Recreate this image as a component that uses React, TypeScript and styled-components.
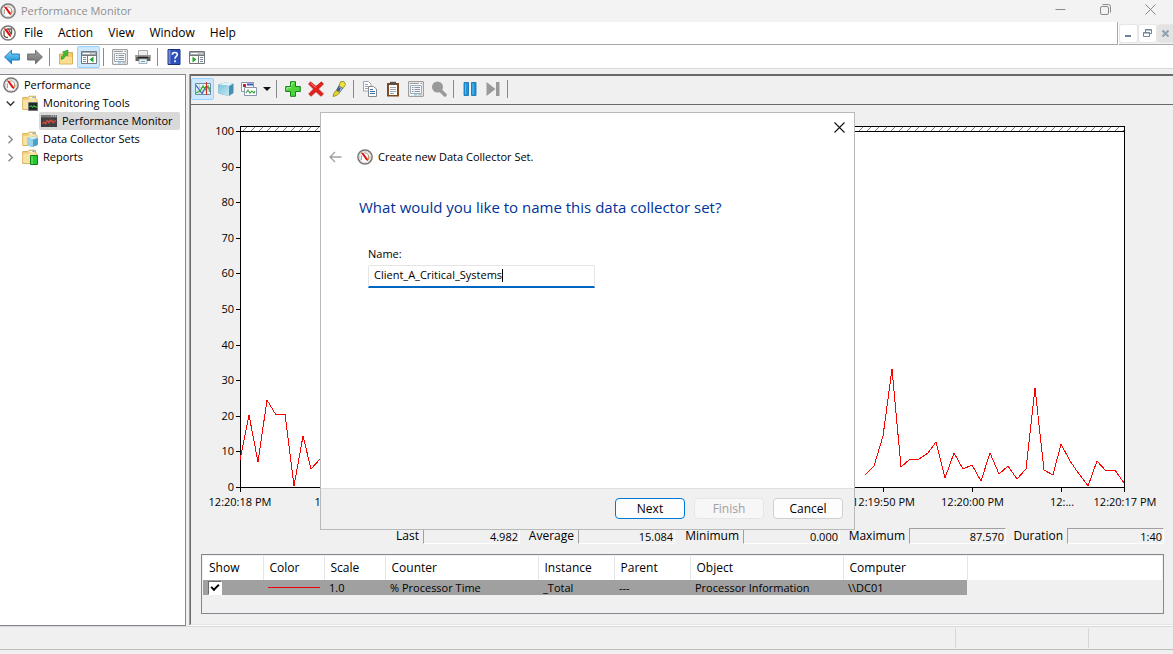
import React from "react";
import styled, { createGlobalStyle, css } from "styled-components";

const GlobalStyle = createGlobalStyle`
  *, *::before, *::after { box-sizing: border-box; }
  body {
    margin: 0;
    background: #f0f0f0;
    color: #000;
    font-family: "Open Sans", "Noto Sans", sans-serif;
    font-size: 12px;
    line-height: 16px;
  }
  button, input { font: inherit; color: inherit; }
`;

const Window = styled.div`
  position: relative;
  min-height: 100vh;
  display: flex;
  flex-direction: column;
  overflow: hidden;
`;

const TitleBar = styled.header`
  display: flex;
  align-items: center;
  height: 22px;
  background: #f3f3f3;
  color: #8f8f8f;
`;

const Title = styled.h1`
  flex: 1;
  margin: 0 0 0 5px;
  font-size: 11px;
  font-weight: 400;
`;

const CaptionButton = styled.button`
  width: 45px;
  height: 22px;
  padding: 0 0 3px;
  border: 0;
  background: none;
  display: grid;
  place-items: center;
`;

const MenuRow = styled.div`
  display: flex;
  height: 23px;
  background: #fff;
`;

const MenuBar = styled.nav`
  flex: 1;
  display: flex;
  align-items: center;
  gap: 15px;
  border-right: 1px solid #a8a8a8;
  border-bottom: 1px solid #a8a8a8;
`;

const MenuItem = styled.button<{ $first?: boolean }>`
  padding: 0;
  border: 0;
  background: none;
  margin-left: ${(p) => (p.$first ? "-7px" : "0")};
`;

const MdiControls = styled.div`
  display: flex;
  align-items: center;
  gap: 2px;
  padding-left: 1px;
  margin-left: 1px;
  background: #f3f3f3;
  border-bottom: 1px solid #a8a8a8;
`;

const MdiButton = styled.button<{ $muted?: boolean }>`
  width: ${(p) => (p.$muted ? "15px" : "17px")};
  height: 17px;
  padding: 0;
  border: 0;
  border-radius: 2px;
  background: ${(p) => (p.$muted ? "#e3e3e3" : "#fff")};
  box-shadow: 0 0 0 1px #e6e6e6;
  display: grid;
  place-items: center;
`;

const ToolBar = styled.div<{ $tone: "white" | "gray" }>`
  display: flex;
  align-items: center;
  ${(p) =>
    p.$tone === "white"
      ? css`
          height: 24px;
          padding-top: 1px;
          background: #fff;
          border-bottom: 1px solid #d9d9d9;
        `
      : css`
          height: 29px;
          padding: 0 0 2px;
          border-bottom: 1px solid #696969;
        `}
`;

const ToolButton = styled.button<{ $active?: boolean; $narrow?: boolean }>`
  flex: none;
  width: ${(p) => (p.$narrow ? "13px" : "23px")};
  height: 22px;
  padding: 0;
  border: 1px solid ${(p) => (p.$active ? "#99d1ff" : "transparent")};
  border-radius: 2px;
  background: ${(p) => (p.$active ? "#cce8ff" : "none")};
  display: grid;
  place-items: center;
`;

const Separator = styled.span`
  flex: none;
  width: 8px;
  height: 18px;
  background: linear-gradient(#8a8a8a, #8a8a8a) 3px 0 / 1px 100% no-repeat;
`;

const Workspace = styled.div`
  flex: 1;
  display: flex;
  gap: 4px;
  padding-top: 5px;
`;

const TreePane = styled.aside`
  width: 186px;
  padding-top: 1px;
  background: #fff;
  border: 1px solid #828790;
  border-left: 0;
  font-size: 11px;
`;

const TreeList = styled.ul`
  list-style: none;
  margin: 0;
  padding: 0;
`;

const TreeRow = styled.li<{ $level: number }>`
  display: flex;
  align-items: center;
  height: 18px;
  padding-left: ${(p) => [3, 3, 39][p.$level]}px;
`;

const TreeToggle = styled.button`
  width: 19px;
  height: 16px;
  padding: 0 4px 0 0;
  border: 0;
  background: none;
  display: grid;
  place-items: center;
`;

const TreeLabel = styled.span<{ $selected?: boolean }>`
  display: flex;
  align-items: center;
  gap: 5px;
  height: 18px;
  padding: ${(p) => (p.$selected ? "0 7px 0 2px" : "0")};
  border-radius: 2px;
  background: ${(p) => (p.$selected ? "#d9d9d9" : "none")};
  white-space: nowrap;
`;

const Content = styled.main`
  flex: 1;
  min-width: 0;
  display: flex;
  flex-direction: column;
  margin-bottom: 1px;
  border-left: 1px solid #696969;
  border-top: 2px solid #696969;
  border-bottom: 1px solid #e3e3e3;
  box-shadow: -1px 0 0 #a0a0a0, 0 1px 0 #fff;
`;

const Chart = styled.section`
  display: grid;
  grid-template-columns: 45px minmax(0, 1fr);
  padding: 17px 48px 0 0;
  font-size: 11px;
`;

const ScaleLabels = styled.ol`
  list-style: none;
  margin: 0;
  padding: 0 2px 0 0;
  height: 374px;
  display: flex;
  flex-direction: column;
  justify-content: space-between;
  text-align: right;
  line-height: 18px;
`;

const Plot = styled.svg`
  display: block;
  width: 100%;
  height: 366px;
  margin-top: 4px;
`;

const TimeLabels = styled.ol`
  list-style: none;
  margin: -2px 0 0;
  padding: 0 16px 0 17px;
  display: grid;
  grid-template-columns: 64fr 30fr 88fr 93fr repeat(6, 89fr) 14fr 62fr 64fr;
  justify-items: center;
  font-size: 11px;
  white-space: nowrap;
`;

const TimeLabel = styled.li<{ $column: number }>`
  grid-column: ${(p) => p.$column};
  display: flex;
  justify-content: center;
  width: 0;
`;

const Stats = styled.dl`
  display: flex;
  justify-content: flex-end;
  margin: 18px 9px 0 0;
  line-height: 16px;
`;

const StatName = styled.dt<{ $width: number }>`
  width: ${(p) => p.$width}px;
  padding-right: 4px;
  display: flex;
  justify-content: flex-end;
`;

const StatValue = styled.dd`
  width: 97px;
  height: 16px;
  margin: 0;
  padding-right: 1px;
  text-align: right;
  border: 1px solid;
  border-color: #a0a0a0 #fff #fff #a0a0a0;
  font-size: 11px;
  line-height: 15px;
`;

const CounterPane = styled.section`
  height: 60px;
  margin: 10px 9px 10px 10px;
  padding: 1px;
  border: 1px solid #828790;
  background: linear-gradient(#fff, #fff) 1px 1px / calc(100% - 2px) 24px no-repeat;
`;

const CounterTable = styled.table`
  width: 764px;
  table-layout: fixed;
  border-collapse: collapse;
`;

const HeadCell = styled.th<{ $width: number }>`
  width: ${(p) => p.$width}px;
  height: 24px;
  padding: 0 0 0 6px;
  text-align: left;
  font-weight: 400;
  border-right: 1px solid #e5e5e5;
`;

const Cell = styled.td`
  height: 15px;
  padding: 0 0 0 5px;
  font-size: 11px;
  line-height: 15px;
  background: #a0a0a0;
  white-space: nowrap;
`;

const ShowBox = styled.input`
  appearance: none;
  width: 14px;
  height: 14px;
  margin: 0;
  border: 1px solid;
  border-color: #696969 #fff #fff #696969;
  background: #fff;
  display: grid;
  place-items: center;
  &:checked::before {
    content: "";
    width: 8px;
    height: 5px;
    margin-bottom: 3px;
    border: solid #000;
    border-width: 0 0 2px 2px;
    transform: rotate(-45deg);
  }
`;

const LineSwatch = styled.span`
  display: block;
  height: 1px;
  margin-right: 4px;
  background: #f00000;
`;

const StatusBar = styled.footer`
  display: grid;
  grid-template-columns: 1fr 133px 84px;
  height: 24px;
  padding: 1px 0;
  background: #f0f0f0;
  border-top: 1px solid #d7d7d7;
  border-bottom: 1px solid #bdbdbd;
`;

const StatusCell = styled.span`
  border-right: 1px solid #d7d7d7;
  &:last-child { border-right: 0; }
`;

const BottomEdge = styled.div`
  height: 4px;
`;

const Dialog = styled.section`
  position: absolute;
  left: 320px;
  top: 112px;
  width: 535px;
  height: 418px;
  display: flex;
  flex-direction: column;
  background: #fff;
  border: 1px solid #b9b9b9;
`;

const DialogTop = styled.div`
  display: flex;
  justify-content: flex-end;
  padding: 4px 5px 0 0;
`;

const PlainButton = styled.button`
  width: 20px;
  height: 20px;
  padding: 0;
  border: 0;
  background: none;
  display: grid;
  place-items: center;
`;

const DialogHeading = styled.div`
  display: flex;
  align-items: center;
  height: 20px;
  margin-top: 10px;
  padding-left: 4px;
`;

const HeadingIcon = styled.span`
  display: flex;
  margin: 0 5px 0 12px;
`;

const DialogTitle = styled.h2`
  margin: 0;
  font-size: 11px;
  font-weight: 400;
`;

const DialogBody = styled.div`
  flex: 1;
  padding: 29px 38px 0;
`;

const Question = styled.h3`
  margin: 0 0 28px;
  font-size: 15px;
  line-height: 22px;
  font-weight: 400;
  color: #003399;
`;

const Field = styled.div`
  margin-left: 9px;
  width: 227px;
`;

const FieldLabel = styled.label`
  display: block;
  font-size: 11px;
  margin-bottom: 3px;
`;

const InputFrame = styled.div`
  display: flex;
  align-items: center;
  height: 23px;
  padding: 0 5px 2px;
  border: 1px solid #e5e5e5;
  border-bottom: 2px solid #0067c0;
  border-radius: 2px 2px 0 0;
`;

const TextInput = styled.input`
  field-sizing: content;
  max-width: 100%;
  padding: 0;
  border: 0;
  outline: 0;
  background: none;
  font-size: 11px;
  line-height: 16px;
  caret-color: transparent;
`;

const Caret = styled.span`
  width: 1px;
  height: 13px;
  background: #000;
`;

const DialogFooter = styled.div`
  display: flex;
  justify-content: flex-end;
  gap: 9px;
  height: 41px;
  padding: 9px 11px 0 0;
  background: #f0f0f0;
  border-top: 1px solid #dfdfdf;
`;

const DialogButton = styled.button<{ $primary?: boolean }>`
  width: 70px;
  height: 21px;
  padding: 0;
  border: 1px solid ${(p) => (p.$primary ? "#0078d4" : "#d0d0d0")};
  border-radius: 4px;
  background: #fdfdfd;
  line-height: 18px;
  &:disabled {
    color: #a0a0a0;
    border-color: #e6e6e6;
    background: #f7f7f7;
  }
`;

type IconProps = { children: React.ReactNode; size?: number };
const Icon = ({ children, size = 16 }: IconProps) => (
  <svg width={size} height={size} viewBox="0 0 16 16" fill="none" aria-hidden="true">
    {children}
  </svg>
);

const GaugeIcon = () => (
  <Icon>
    <circle cx="8" cy="8" r="7.1" fill="#fff" stroke="#757575" strokeWidth="1.5" />
    <circle cx="8" cy="8" r="5.7" stroke="#d8d4d0" />
    <path d="M4.3 11V6.3M6.5 4.2c3-1 5.200.8 5.200 3.800 0 1.500-.4 2.500-1 3.300" stroke="#9c8f80" />
    <path d="M12 7.500c.2 1.500-.2 2.800-1 3.700" stroke="#d98b3d" />
    <path d="M3.800 3.600l2.600.5 4.300 5.600.3 2.300-2-.9z" fill="#e01010" />
  </Icon>
);

const DocGaugeIcon = () => (
  <Icon>
    <circle cx="8" cy="8" r="7.1" fill="#fff" stroke="#757575" strokeWidth="1.500" />
    <path d="M4 5.500v4c0 2 2 3 4 3M7 4h4.500v5" stroke="#6e5a48" strokeWidth="1.400" />
    <path d="M3.500 3.300l3 .5 4.300 6 .2 2.200-2-.9z" fill="#e01010" />
    <path d="M8.500 4.500l3 5" stroke="#333" />
  </Icon>
);

const ArrowIcon = ({ back }: { back?: boolean }) => (
  <Icon>
    <defs>
      <linearGradient id={back ? "arrowBlue" : "arrowGray"} x1="0" y1="0" x2="0" y2="1">
        <stop offset="0" stopColor={back ? "#8ad8fa" : "#a4a4a4"} />
        <stop offset="1" stopColor={back ? "#0a86d0" : "#6e6e6e"} />
      </linearGradient>
    </defs>
    <path
      d={back ? "M.6 8L7.500 1.200v3.800h7.900v6H7.500v3.800z" : "M15.400 8L8.500 1.200v3.800H.6v6h7.900v3.800z"}
      fill={back ? "url(#arrowBlue)" : "url(#arrowGray)"}
      stroke={back ? "#1673b5" : "#666"}
      strokeWidth=".9"
    />
  </Icon>
);

const folderBody = (
  <>
    <path d="M.7 2.500h5l1.300-1.300h6.500v3H15v10.300H.7z" fill="#f0cf78" stroke="#d0a848" strokeWidth=".8" />
    <path d="M7.500 2h5v1.500h-5z" fill="#fff" />
    <path d="M10.500 1.800h2v1.200h-2z" fill="#65a6dc" />
    <path d="M1.200 5h4.500L7 4h7.500v10H1.200z" fill="#f9e3a2" />
  </>
);

const UpFolderIcon = () => (
  <Icon>
    <path d="M1.500 5h6l1-1.500h6v11.500h-13z" fill="#efcb70" stroke="#cda046" strokeWidth=".8" />
    <path d="M2 8h12v6.500H2z" fill="#f9de92" />
    <path d="M3.500 10.500c2-.5 3.500-2 4.200-4.700l1.800 1.200.5-6-5.500 2 1.500 1.200c-.5 2-1.500 3-3 3.800z" fill="#45bd35" stroke="#23872a" strokeWidth=".6" />
  </Icon>
);

const PaneIcon = ({ right }: { right?: boolean }) => (
  <Icon>
    <path d="M.5 2.500h15v12H.5z" fill="#fff" stroke="#777" />
    <path d="M1 3h14v3H1z" fill="#a1a9b2" />
    <path d="M2 4.500h7M10.500 4.500h1M12.500 4.500h1" stroke="#fff" />
    <path d="M1 6.500h14" stroke="#777" />
    <path d={right ? "M9.500 6v8" : "M6.500 6v8"} stroke="#777" />
    <path d={right ? "M11 8.500h3M11 10.500h3M11 12.500h3" : "M2 8.500h3M2 10.500h3M2 12.500h3"} stroke="#7d8fa3" />
    <path d={right ? "M3.500 7.500v6l4-3z" : "M12.500 7.500v6l-4-3z"} fill="#22a52a" />
  </Icon>
);

const PropertiesIcon = () => (
  <Icon>
    <path d="M.7.7h14.600v14.600H.7z" fill="#fff" stroke="#8b8b8b" />
    <path d="M2 2.500h9M12.500 2.500h1.500" stroke="#9a9a9a" />
    <path d="M2.500 4.500h11v8h-11z" fill="#f3f5f7" stroke="#a5adb5" />
    <path d="M4 6.500h1.500M6.500 6.500H12M4 8.500h1.500M6.500 8.500H12M4 10.500h1.500M6.500 10.500H12" stroke="#8997a5" />
    <path d="M6 13.800h3" stroke="#63b8e8" />
    <path d="M10 13.800h4" stroke="#aaa" />
  </Icon>
);

const PrinterIcon = () => (
  <Icon>
    <path d="M3.500 1.500h9v5h-9z" fill="#eee" stroke="#aaa" />
    <path d="M.5 6h15v6H.5z" fill="#606060" />
    <path d="M.5 6h15v2H.5z" fill="#989898" />
    <path d="M3 8.500h10" stroke="#222" strokeWidth="1.500" />
    <path d="M4 10h8v4.500H4z" fill="#edf8fc" stroke="#888" strokeWidth=".7" />
    <path d="M6 12.500h4" stroke="#4aa9cb" />
  </Icon>
);

const HelpIcon = () => (
  <Icon>
    <path d="M2 .5h12v15H2z" fill="#2d50bd" stroke="#1c3280" />
    <path d="M2.500 1h2v14h-2z" fill="#7188cf" />
    <path d="M6.300 5.700c0-3 5-2.900 5-.2 0 2-2.300 1.900-2.300 4.200M9 11.300v2" stroke="#fff" strokeWidth="1.600" />
  </Icon>
);

const ToolsFolderIcon = () => (
  <Icon>
    {folderBody}
    <path d="M6.500 7.500h9v8h-9z" fill="#1f2924" stroke="#777" />
    <path d="M7.500 12l1.500-1.500 1.500 2 1.500-2 1 1.500h2" stroke="#4cda55" />
  </Icon>
);

const CollectorFolderIcon = () => (
  <Icon>
    {folderBody}
    <path d="M5 7L11.500 5.500 16 7v6.500L11 16l-6-1.500z" fill="#4aa3ca" />
    <path d="M5 7L11.500 5.500 16 7l-5 1.500z" fill="#cceef8" />
    <path d="M5 7l6 1.500V16l-6-1.500z" fill="#9ad3e9" />
  </Icon>
);

const ReportFolderIcon = () => (
  <Icon>
    {folderBody}
    <path d="M8.500 6.500h7v9h-7z" fill="#26c52c" stroke="#0d7d17" />
    <path d="M10 7v8" stroke="#7bf07c" />
  </Icon>
);

const MonitorIcon = () => (
  <Icon>
    <path d="M0 2h16v12H0z" fill="#3d3d3d" />
    <path d="M0 2h16v2.500H0z" fill="#777" />
    <path d="M10 3h1M12 3h1M14 3h1" stroke="#ddd" />
    <path d="M1 7.500h14M1 10.500h14M4.500 5v9M8.500 5v9M12.500 5v9" stroke="#5d4a4a" strokeWidth=".6" />
    <path d="M1 10.500l2-1 1.500 1 2-3 1.500 2 2-2.500 2 2.500L15 7.500" stroke="#e04840" strokeWidth="1.300" />
  </Icon>
);

const GraphIcon = () => (
  <Icon>
    <path d="M.5 2.500h15v11H.5z" fill="#e7f4f5" stroke="#6f8ba3" />
    <path d="M1 6.500h14M1 10h14M4.500 3v10M8 3v10" stroke="#b4ccd3" strokeWidth=".7" />
    <path d="M1 4l4 6 2 2.500 4-7 4 2" stroke="#3868b4" strokeWidth="1.200" />
    <path d="M1 12l4-2 3-5 3 4 2-4 2 6" stroke="#3caa3c" strokeWidth="1.200" />
    <path d="M11.500 1v13" stroke="#cd2c23" />
  </Icon>
);

const CubeIcon = () => (
  <Icon>
    <defs>
      <linearGradient id="cubeFront" x1="0" y1="0" x2="1" y2="1">
        <stop offset="0" stopColor="#7cc3dd" />
        <stop offset="1" stopColor="#c4e8f2" />
      </linearGradient>
    </defs>
    <path d="M.5 3.500L7 1.500l8.500 1v9.500L11 15 .5 12.500z" fill="#4590b4" />
    <path d="M.5 3.500L7 1.500l8.500 1L11 5z" fill="#dff4fa" />
    <path d="M.5 3.500L11 5v10L.5 12.500z" fill="url(#cubeFront)" />
  </Icon>
);

const GraphTypeIcon = () => (
  <Icon>
    <path d="M.5 1.500h12v9H.5z" fill="#fff" stroke="#8d95ad" />
    <path d="M2 3h3v3H2z" fill="#c4203a" />
    <path d="M6 3.500h6" stroke="#3c57b5" strokeWidth="2" />
    <path d="M3.500 6.500h12v8h-12z" fill="#fff" stroke="#8d95ad" />
    <path d="M5 12l2-3 2 3 2-2 2 2 1-2" stroke="#42a348" strokeWidth="1.200" />
  </Icon>
);

const PlusIcon = () => (
  <Icon>
    <path d="M5.500.700h5v4.800h4.800v5h-4.800v4.800h-5v-4.800H.7v-5h4.800z" fill="#4fd43a" stroke="#16801a" />
    <path d="M6.700 5V2h2.500M2 9V6.700h4" stroke="#aaf29b" />
  </Icon>
);

const DeleteIcon = () => (
  <Icon>
    <path d="M2.500.8L8 5.300 13.500.8l2 2.200-5 5 5 5-2.500 2.300L8 10.700 3 15.300.7 13l4.800-5-5-5z" fill="#e3201c" stroke="#b3120f" strokeWidth=".6" />
    <path d="M2.500 2L8 6.700" stroke="#f78783" />
  </Icon>
);

const HighlightIcon = () => (
  <Icon>
    <path d="M9.500.7l3.500-.2 1.500 3-2.500 4-4.200-2z" fill="#efe23a" stroke="#8c8420" strokeWidth=".8" />
    <path d="M7.800 4.500l4.200 2.700-3 4.300-4.200-2z" fill="#3f5f8b" />
    <path d="M8.500 6.500l2 1-2 3" stroke="#c5d5e5" />
    <path d="M5 9.500l4 2-3.500 3L2 15.500 3 12z" fill="#e5d62c" stroke="#8c8420" strokeWidth=".8" />
  </Icon>
);

const CopyIcon = () => (
  <Icon>
    <path d="M1.500.5h5l2.500 2.500v7H1.500z" fill="#fff" stroke="#a4a4a4" />
    <path d="M3 3.500h3M3 5.500h4M3 7.500h4" stroke="#8ba6c6" />
    <path d="M6.500 5.500h5L14.500 8v7.500h-8z" fill="#fff" stroke="#888" />
    <path d="M8 8.500h3M8 10.500h5M8 12.500h5" stroke="#3474b5" />
  </Icon>
);

const PasteIcon = () => (
  <Icon>
    <path d="M2 2h12v13.500H2z" fill="#7b4a20" />
    <path d="M4 4h8v10H4z" fill="#fff" />
    <path d="M5 .8h6v3H5z" fill="#55514c" />
    <path d="M5 6.500h6M5 8.500h6M5 10.500h6M5 12.500h4" stroke="#9ba7b5" />
  </Icon>
);

const SearchIcon = () => (
  <Icon>
    <circle cx="6.500" cy="6" r="5.500" fill="#999" />
    <path d="M9 9l5 5" stroke="#999" strokeWidth="3.500" strokeLinecap="round" />
  </Icon>
);

const PauseIcon = () => (
  <Icon>
    <path d="M2 1.500h4.500v13H2zM9.500 1.500H14v13H9.500z" fill="#1e94dd" stroke="#116cad" strokeWidth=".8" />
    <path d="M3.500 2.500v11M11 2.500v11" stroke="#58bff2" />
  </Icon>
);

const StepIcon = () => (
  <Icon>
    <path d="M1.500 1l9 7-9 7zM11 1h3.500v14H11z" fill="#999" />
  </Icon>
);

const timeTicks: [number, string][] = [
  [1, "12:20:18 PM"],
  [3, "12:18:50 PM"],
  [9, "12:19:50 PM"],
  [10, "12:20:00 PM"],
  [12, "12:..."],
  [13, "12:20:17 PM"],
];

const tickPositions = [4, 113, 202, 291, 380, 469, 558, 647, 736, 825, 888];

const earlier =
  "4,334 13,289 22,336 31,274 40,289 49,288 58,360 67,310 75,343 84,333";
const later =
  "629,349 638,340 647,310 656,243 665,341 674,333 683,333 692,327 700,316 709,352 718,327 727,343 736,339 745,355 754,327 763,348 772,340 781,353 790,343 799,262 808,344 817,349 825,318 834,335 843,348 852,360 861,335 870,345 879,344 888,357";

const stats: [string, string, number][] = [
  ["Last", "4.982", 40],
  ["Average", "15.084", 58],
  ["Minimum", "0.000", 68],
  ["Maximum", "87.570", 69],
  ["Duration", "1:40", 61],
];

const columns: [string, number][] = [
  ["Show", 60],
  ["Color", 61],
  ["Scale", 61],
  ["Counter", 153],
  ["Instance", 76],
  ["Parent", 76],
  ["Object", 153],
  ["Computer", 124],
];

const PerformancePlot = () => (
  <Plot viewBox="0 0 889 366" preserveAspectRatio="none" role="img" aria-label="Processor time history">
    <defs>
      <pattern id="hatch" width="8" height="5" x="5" y="1" patternUnits="userSpaceOnUse">
        <path d="M1 5L6 0" stroke="#555" strokeWidth=".8" />
      </pattern>
    </defs>
    <rect x="4" y="0" width="885" height="362" fill="#fff" />
    <rect x="5" y="1" width="883" height="4" fill="url(#hatch)" />
    <g shapeRendering="crispEdges">
      <path d="M4.500 366V.5h884V366M4 5.500h885M0 361.500h888" fill="none" stroke="#000" />
      {Array.from({ length: 10 }, (_, i) => (
        <rect key={i} x="0" y={5 + Math.round(i * 35.6)} width="4" height="1" fill="#000" />
      ))}
      {tickPositions.map((x) => (
        <rect key={x} x={x} y="362" width="1" height="4" fill="#000" />
      ))}
      {[earlier, later].map((points) => (
        <polyline key={points} points={points} fill="none" stroke="#f00" strokeWidth="1" vectorEffect="non-scaling-stroke" />
      ))}
    </g>
  </Plot>
);

const CreateSetDialog = () => (
  <Dialog role="dialog" aria-labelledby="dialog-title">
    <DialogTop>
      <PlainButton aria-label="Close">
        <svg width="11" height="11" viewBox="0 0 11 11">
          <path d="M.5.5l10 10M10.500.5l-10 10" stroke="#111" strokeWidth="1.100" />
        </svg>
      </PlainButton>
    </DialogTop>
    <DialogHeading>
      <PlainButton aria-label="Back">
        <svg width="13" height="12" viewBox="0 0 13 12" fill="none">
          <path d="M12.500 6H1M6 1L1 6l5 5" stroke="#a0a0a0" strokeWidth="1.300" />
        </svg>
      </PlainButton>
      <HeadingIcon><GaugeIcon /></HeadingIcon>
      <DialogTitle id="dialog-title">Create new Data Collector Set.</DialogTitle>
    </DialogHeading>
    <DialogBody>
      <Question>What would you like to name this data collector set?</Question>
      <Field>
        <FieldLabel htmlFor="set-name">Name:</FieldLabel>
        <InputFrame>
          <TextInput id="set-name" type="text" defaultValue="Client_A_Critical_Systems" />
          <Caret />
        </InputFrame>
      </Field>
    </DialogBody>
    <DialogFooter>
      <DialogButton $primary>Next</DialogButton>
      <DialogButton disabled>Finish</DialogButton>
      <DialogButton>Cancel</DialogButton>
    </DialogFooter>
  </Dialog>
);

const Chevron = ({ open }: { open?: boolean }) => (
  <svg width="9" height="9" viewBox="0 0 9 9" fill="none">
    <path
      d={open ? "M.7 2.500l3.800 3.800 3.800-3.800" : "M2.500.7l3.800 3.800-3.800 3.800"}
      stroke={open ? "#333" : "#8b8b8b"}
      strokeWidth="1.400"
    />
  </svg>
);

export default function App() {
  return (
    <>
      <GlobalStyle />
      <Window>
        <TitleBar>
          <GaugeIcon />
          <Title>Performance Monitor</Title>
          <CaptionButton aria-label="Minimize">
            <svg width="11" height="11" viewBox="0 0 11 11"><path d="M.5 5.500h10" stroke="#8a8a8a" /></svg>
          </CaptionButton>
          <CaptionButton aria-label="Restore">
            <svg width="11" height="11" viewBox="0 0 11 11" fill="none" stroke="#8a8a8a">
              <rect x=".5" y="2.500" width="8" height="8" rx="1.500" />
              <path d="M2.500.5h6a2 2 0 012 2v6" />
            </svg>
          </CaptionButton>
          <CaptionButton aria-label="Close">
            <svg width="11" height="11" viewBox="0 0 11 11"><path d="M.5.5l10 10M10.500.5l-10 10" stroke="#8a8a8a" /></svg>
          </CaptionButton>
        </TitleBar>

        <MenuRow>
          <MenuBar>
            <DocGaugeIcon />
            <MenuItem $first>File</MenuItem>
            <MenuItem>Action</MenuItem>
            <MenuItem>View</MenuItem>
            <MenuItem>Window</MenuItem>
            <MenuItem>Help</MenuItem>
          </MenuBar>
          <MdiControls>
            <MdiButton aria-label="Minimize view">
              <svg width="9" height="9" viewBox="0 0 9 9"><path d="M1 7h6" stroke="#6f849b" strokeWidth="2" /></svg>
            </MdiButton>
            <MdiButton aria-label="Restore view">
              <svg width="9" height="9" viewBox="0 0 9 9" fill="none" stroke="#6f849b">
                <path d="M2.500 3V.5h6v4H7M2 1h7M.5 3.500h6v4h-6zM0 4h7" />
              </svg>
            </MdiButton>
            <MdiButton $muted aria-label="Close view">
              <svg width="9" height="9" viewBox="0 0 9 9"><path d="M1.500 1.500l6 6M7.500 1.500l-6 6" stroke="#8fa0b0" strokeWidth="2" /></svg>
            </MdiButton>
          </MdiControls>
        </MenuRow>

        <ToolBar $tone="white">
          <ToolButton aria-label="Back"><ArrowIcon back /></ToolButton>
          <ToolButton aria-label="Forward"><ArrowIcon /></ToolButton>
          <Separator />
          <ToolButton aria-label="Up one level"><UpFolderIcon /></ToolButton>
          <ToolButton $active aria-label="Show console tree"><PaneIcon /></ToolButton>
          <Separator />
          <ToolButton aria-label="Properties"><PropertiesIcon /></ToolButton>
          <ToolButton aria-label="Print"><PrinterIcon /></ToolButton>
          <Separator />
          <ToolButton aria-label="Help"><HelpIcon /></ToolButton>
          <ToolButton aria-label="Show action pane"><PaneIcon right /></ToolButton>
        </ToolBar>

        <Workspace>
          <TreePane>
            <TreeList>
              <TreeRow $level={0}>
                <TreeLabel><GaugeIcon />Performance</TreeLabel>
              </TreeRow>
              <TreeRow $level={1}>
                <TreeToggle aria-label="Collapse"><Chevron open /></TreeToggle>
                <TreeLabel><ToolsFolderIcon />Monitoring Tools</TreeLabel>
              </TreeRow>
              <TreeRow $level={2}>
                <TreeLabel $selected><MonitorIcon />Performance Monitor</TreeLabel>
              </TreeRow>
              <TreeRow $level={1}>
                <TreeToggle aria-label="Expand"><Chevron /></TreeToggle>
                <TreeLabel><CollectorFolderIcon />Data Collector Sets</TreeLabel>
              </TreeRow>
              <TreeRow $level={1}>
                <TreeToggle aria-label="Expand"><Chevron /></TreeToggle>
                <TreeLabel><ReportFolderIcon />Reports</TreeLabel>
              </TreeRow>
            </TreeList>
          </TreePane>

          <Content>
            <ToolBar $tone="gray">
              <ToolButton $active aria-label="View current activity"><GraphIcon /></ToolButton>
              <ToolButton aria-label="View log data"><CubeIcon /></ToolButton>
              <ToolButton aria-label="Graph type"><GraphTypeIcon /></ToolButton>
              <ToolButton $narrow aria-label="Choose graph type">
                <svg width="8" height="4" viewBox="0 0 8 4"><path d="M0 0h8L4 4z" fill="#111" /></svg>
              </ToolButton>
              <Separator />
              <ToolButton aria-label="Add"><PlusIcon /></ToolButton>
              <ToolButton aria-label="Delete"><DeleteIcon /></ToolButton>
              <ToolButton aria-label="Highlight"><HighlightIcon /></ToolButton>
              <Separator />
              <ToolButton aria-label="Copy properties"><CopyIcon /></ToolButton>
              <ToolButton aria-label="Paste counter list"><PasteIcon /></ToolButton>
              <ToolButton aria-label="Graph properties"><PropertiesIcon /></ToolButton>
              <ToolButton aria-label="Zoom"><SearchIcon /></ToolButton>
              <Separator />
              <ToolButton aria-label="Freeze display"><PauseIcon /></ToolButton>
              <ToolButton aria-label="Update data"><StepIcon /></ToolButton>
              <Separator />
            </ToolBar>

            <Chart>
              <ScaleLabels>
                {Array.from({ length: 11 }, (_, i) => (
                  <li key={i}>{100 - i * 10}</li>
                ))}
              </ScaleLabels>
              <PerformancePlot />
            </Chart>
            <TimeLabels>
              {timeTicks.map(([column, text]) => (
                <TimeLabel key={text} $column={column}>{text}</TimeLabel>
              ))}
            </TimeLabels>

            <Stats>
              {stats.map(([name, value, width]) => (
                <React.Fragment key={name}>
                  <StatName $width={width}>{name}</StatName>
                  <StatValue>{value}</StatValue>
                </React.Fragment>
              ))}
            </Stats>

            <CounterPane>
              <CounterTable>
                <thead>
                  <tr>
                    {columns.map(([name, width]) => (
                      <HeadCell key={name} $width={width}>{name}</HeadCell>
                    ))}
                  </tr>
                </thead>
                <tbody>
                  <tr>
                    <Cell><ShowBox type="checkbox" defaultChecked aria-label="Show % Processor Time" /></Cell>
                    <Cell><LineSwatch /></Cell>
                    <Cell>1.0</Cell>
                    <Cell>% Processor Time</Cell>
                    <Cell>_Total</Cell>
                    <Cell>---</Cell>
                    <Cell>Processor Information</Cell>
                    <Cell>\\DC01</Cell>
                  </tr>
                </tbody>
              </CounterTable>
            </CounterPane>
          </Content>
        </Workspace>

        <StatusBar>
          <StatusCell />
          <StatusCell />
          <StatusCell />
        </StatusBar>
        <BottomEdge />

        <CreateSetDialog />
      </Window>
    </>
  );
}
